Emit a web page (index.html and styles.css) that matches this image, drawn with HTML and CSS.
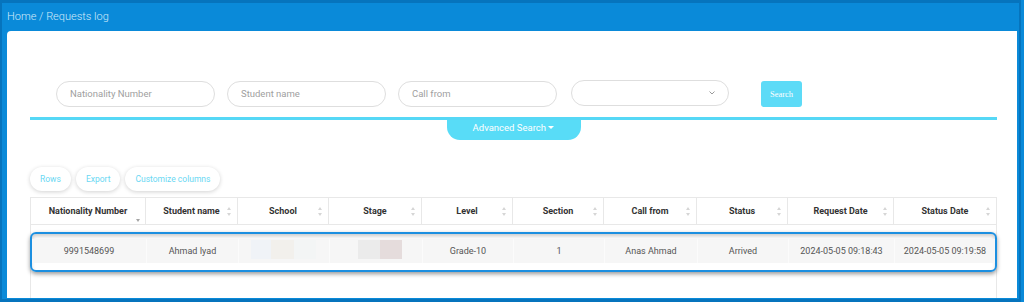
FILE: index.html
```html
<!DOCTYPE html>
<html>
<head>
<meta charset="utf-8">
<link rel="stylesheet" href="styles.css">
</head>
<body>
<div class="frame">
  <div class="crumb">Home / Requests log</div>
  <div class="card">
    <div class="search-row">
      <div class="field">Nationality Number</div>
      <div class="field">Student name</div>
      <div class="field">Call from</div>
      <div class="field select"><svg class="chev" width="6" height="4" viewBox="0 0 6 4"><polyline points="0.5,0.5 3,3 5.5,0.5" fill="none" stroke="#9a9a9a" stroke-width="1"/></svg></div>
      <div class="search-btn">Search</div>
    </div>
    <div class="divider"></div>
    <div class="adv-wrap"><div class="adv">Advanced Search <span class="caret"></span></div></div>
    <div class="toolbar">
      <div class="tbtn">Rows</div>
      <div class="tbtn">Export</div>
      <div class="tbtn">Customize columns</div>
    </div>
    <div class="table">
      <div class="thead">
        <div class="th">Nationality Number<span class="sort-desc"></span></div>
        <div class="th">Student name<span class="sort"></span></div>
        <div class="th">School<span class="sort"></span></div>
        <div class="th">Stage<span class="sort"></span></div>
        <div class="th">Level<span class="sort"></span></div>
        <div class="th">Section<span class="sort"></span></div>
        <div class="th">Call from<span class="sort"></span></div>
        <div class="th">Status<span class="sort"></span></div>
        <div class="th">Request Date<span class="sort"></span></div>
        <div class="th">Status Date<span class="sort"></span></div>
      </div>
      <div class="highlight">
        <div class="trow">
          <div class="td">9991548699</div>
          <div class="td">Ahmad Iyad</div>
          <div class="td blur"><span class="b b1"></span><span class="b b2"></span><span class="b b3"></span></div>
          <div class="td blur"><span class="b b4"></span><span class="b b5"></span></div>
          <div class="td">Grade-10</div>
          <div class="td">1</div>
          <div class="td">Anas Ahmad</div>
          <div class="td">Arrived</div>
          <div class="td">2024-05-05 09:18:43</div>
          <div class="td">2024-05-05 09:19:58</div>
        </div>
      </div>
      <div class="rest"></div>
    </div>
  </div>
</div>
</body>
</html>
```

FILE: styles.css
```css
* { box-sizing: border-box; }
html, body { margin: 0; padding: 0; }
body {
  width: 1024px;
  height: 302px;
  overflow: hidden;
  background: #0a8ad9;
  font-family: Roboto, "Liberation Sans", sans-serif;
}
.frame {
  width: 1021px;
  height: 302px;
  border-top: 3px solid #0674bd;
  border-left: 2px solid #0674bd;
  border-right: 2px solid #0674bd;
  border-bottom: 3px solid #0674bd;
  display: flex;
  flex-direction: column;
}
.crumb {
  height: 28px;
  padding-left: 5px;
  font-size: 11px;
  font-weight: 300;
  color: #d4ebfa;
  line-height: 28px;
}
.card {
  flex: 1;
  margin: 0 2px 1px 5px;
  background: #fff;
  border-radius: 4px 0 0 0;
  padding: 49px 20px 0 23px;
  display: flex;
  flex-direction: column;
}
.search-row {
  display: flex;
  align-items: center;
  height: 27px;
  padding-left: 26px;
  gap: 12px;
}
.field {
  width: 159px;
  height: 26px;
  border: 1px solid #dedede;
  border-radius: 13px;
  padding-left: 13px;
  font-size: 9.5px;
  color: #a0a0a0;
  line-height: 24px;
}
.field.select {
  width: 158px;
  margin-left: 2px;
  margin-top: -2px;
  position: relative;
}
.chev { position: absolute; right: 13px; top: 10px; }
.search-btn {
  margin-left: 20px;
  width: 41px;
  height: 26px;
  background: #5ddbf7;
  border-radius: 3px;
  color: #fff;
  font-family: "Liberation Serif", serif;
  font-size: 8.5px;
  line-height: 26px;
  text-align: center;
  margin-top: 1px;
}
.divider {
  margin-top: 10px;
  height: 3px;
  background: #56d8f6;
}
.adv-wrap { display: flex; justify-content: center; }
.adv {
  width: 134px;
  height: 20px;
  background: #58dcf7;
  border-radius: 0 0 13px 13px;
  color: #fff;
  font-size: 9.5px;
  line-height: 16px;
  text-align: center;
}
.caret {
  display: inline-block;
  width: 0; height: 0;
  border-left: 3px solid transparent;
  border-right: 3px solid transparent;
  border-top: 3px solid #fff;
  vertical-align: 2px;
}
.toolbar {
  margin-top: 27px;
  display: flex;
  gap: 5px;
}
.tbtn {
  height: 24px;
  padding: 0 10px;
  border-radius: 12px;
  background: #fff;
  box-shadow: 0 1px 4px rgba(0,0,0,0.18);
  color: #6ad8f3;
  font-size: 8.5px;
  line-height: 24px;
}
.table {
  margin-top: 6px;
  flex: 1;
  display: flex;
  flex-direction: column;
  border-left: 1px solid #e8e8e8;
  border-right: 1px solid #e8e8e8;
}
.thead, .trow {
  display: grid;
  grid-template-columns: 115px 92px 91px 93px 91px 91px 93px 91px 106px 1fr;
}
.thead {
  border-top: 1px solid #e8e8e8;
  border-bottom: 1px solid #e8e8e8;
}
.th {
  height: 26px;
  border-right: 1px solid #e8e8e8;
  font-size: 9px;
  font-weight: 700;
  color: #333;
  display: flex;
  align-items: center;
  justify-content: center;
  position: relative;
}
.th:last-child { border-right: none; }
.sort {
  position: absolute;
  right: 5px;
  top: 9px;
  width: 5px;
  height: 9px;
}
.sort::before, .sort::after {
  content: "";
  position: absolute;
  left: 0;
  border-left: 2.5px solid transparent;
  border-right: 2.5px solid transparent;
}
.sort::before { top: 0; border-bottom: 3.5px solid #d6d6d6; }
.sort::after { bottom: 0; border-top: 3.5px solid #d6d6d6; }
.sort-desc {
  position: absolute;
  right: 5px;
  top: 21px;
  border-left: 2.5px solid transparent;
  border-right: 2.5px solid transparent;
  border-top: 3.5px solid #a5a5a5;
}
.highlight {
  margin: 7px -1px 0 -1px;
  border: 2px solid #1c8fe0;
  border-radius: 6px;
  padding: 5px 0 7px 0;
  box-shadow: inset 0 3px 4px -1px rgba(0,0,0,0.22), 0 2px 4px rgba(0,0,0,0.4);
}
.td {
  height: 24px;
  background: #f6f6f6;
  border-right: 1px solid #fbfbfb;
  font-size: 9px;
  color: #555;
  display: flex;
  align-items: center;
  justify-content: center;
}
.td:last-child { border-right: none; }
.td.blur { justify-content: flex-start; }
.b { display: block; height: 19px; margin-top: -4px; }
.b1 { margin-left: 12px; width: 20px; background: #f0f3f7; }
.b2 { width: 23px; background: #f2f0ec; }
.b3 { width: 22px; background: #f3f5f5; }
.b4 { margin-left: 28px; width: 22px; background: #ebebeb; }
.b5 { width: 22px; background: #e5dcdc; }
.rest { flex: 1; }
```
